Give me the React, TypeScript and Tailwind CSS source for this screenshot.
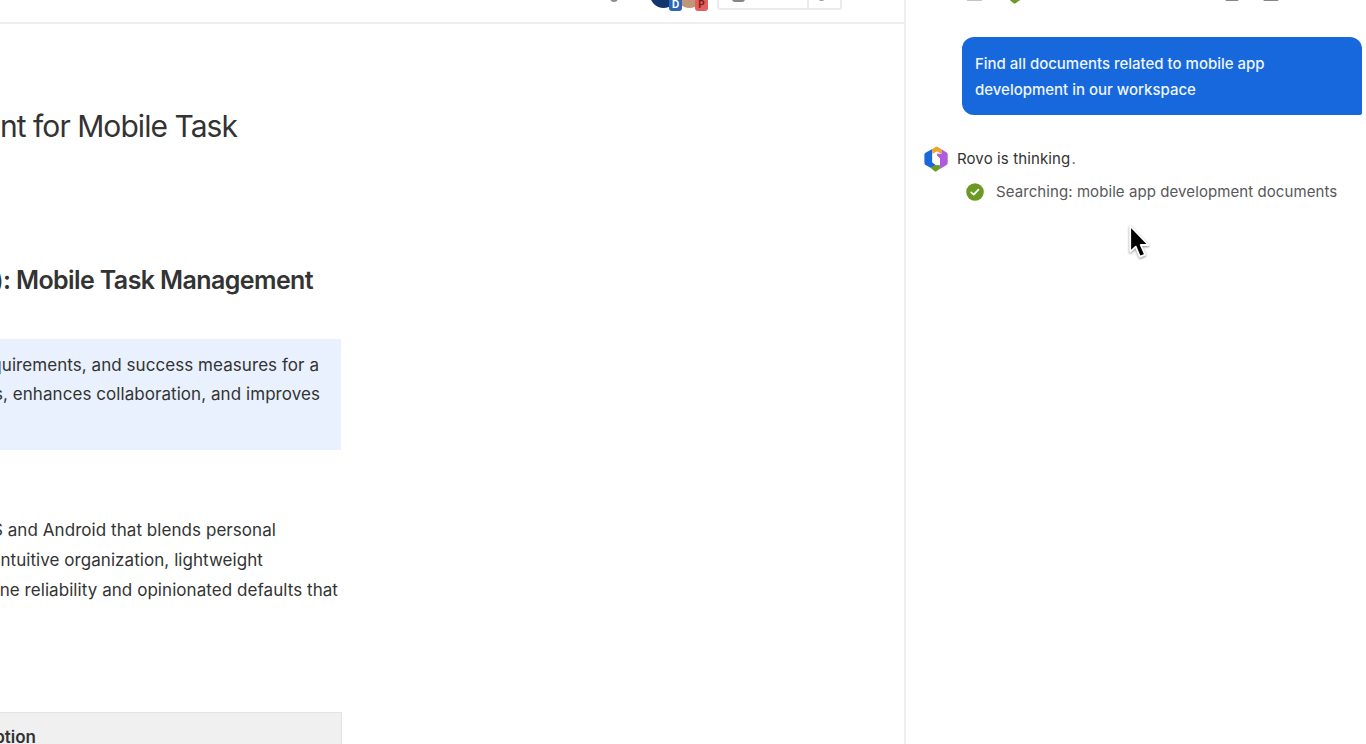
import type { ReactNode } from "react";

function RovoLogo({ className }: { className?: string }) {
  return (
    <svg viewBox="0 0 24 26" className={className}>
      <path d="M8 3 15 2l4 6v12l-7 2-5-5Z" fill="#fff" />
      <path d="M8.300 2.900v12.800q0 .8.700 1.300l3 2.200-5 2.900L1.500 18.900Q.400 18.200.400 17V8.600q0-1.200 1.100-1.900Z" fill="#1868db" />
      <path d="M8 3.300 11.400.9q.900-.6 1.800-.1L17.600 3.300v4.700L13.200 5.400 8.600 8Z" fill="#eaa62b" />
      <path d="M17.600 3.300l5 3.300q1.100.7 1.100 1.900v8.600q0 1.200-1.100 1.900L15.900 23v-9.600q0-1-.8-1.700l-2.300-1.800V7.600L17.600 8Z" fill="#af5bdc" />
      <path d="M6.500 21.800 11 19l4.900-2.500v6.300l-3.400 2.500q-.8.500-1.600.1Z" fill="#6a9a23" />
      <path d="M8.500 8 13.100 5.400v4.400l2.900 2.400v6.700l-3.400.3-3.500-2.500q-.6-.5-.6-1.200Z" fill="#fff" />
    </svg>
  );
}

function CheckBadge() {
  return (
    <svg viewBox="0 0 18 18" className="h-[18px] w-[18px] shrink-0">
      <circle cx="9" cy="9" r="8.800" fill="#6a9a23" />
      <path d="m5.200 9.400 2.500 2.300 4.800-5" fill="none" stroke="#fff" strokeWidth="1.700" strokeLinecap="round" strokeLinejoin="round" />
    </svg>
  );
}

function Cursor() {
  return (
    <svg viewBox="0 0 24 36" className="absolute top-[224px] left-[222px] h-9 w-6 drop-shadow-[0_1px_1px_rgba(0,0,0,0.45)]">
      <path d="M2.200 2v25.800l5.500-5.100 4.200 10.200 5.200-2.200-4.400-9.700h7.800Z" fill="#000" stroke="#fff" strokeWidth="1.800" strokeLinejoin="round" />
    </svg>
  );
}

// Lines are anchored on their right edge, the left side runs off screen
function Line({ className, children }: { className: string; children: ReactNode }) {
  return <div className={`flex justify-end whitespace-nowrap ${className}`}>{children}</div>;
}

function Avatar({ color, badge, letter }: { color: string; badge: string; letter: string }) {
  return (
    <div className={`relative h-[27px] w-[27px] rounded-full ${color}`}>
      <span className={`absolute -right-[5px] -bottom-[3px] z-10 flex h-[14px] w-[13px] items-center justify-center rounded-[3px] text-[10px] font-bold ${badge}`}>
        {letter}
      </span>
    </div>
  );
}

// Scrolled almost out of view: only the lower edge of each control shows
function Toolbar() {
  return (
    <header className="h-6 shrink-0 border-b-2 border-[#efeff0]">
      <div className="flex h-2 items-end pl-[610px]">
        <div className="mb-1.5 h-3 w-2 rounded-full bg-[#8c8c8c]" />
        <div className="ml-8 flex">
          <Avatar color="bg-[#12356e]" badge="bg-[#2c66b8] text-white" letter="D" />
          <div className="-ml-px">
            <Avatar color="bg-[#c19578]" badge="bg-[#e2605b] text-[#7c1d1d]" letter="P" />
          </div>
        </div>
        <div className="-mb-0.5 ml-[14px] flex h-[30px] w-[125px] items-end rounded-[3px] border-2 border-[#ebebec]">
          <div className="flex h-full w-[90px] items-end border-r-2 border-[#ebebec] pb-1.5 pl-[13px]">
            <div className="h-[14px] w-[13px] rounded-[3px] border-2 border-[#858585]" />
          </div>
          <div className="mb-[7px] ml-[9px] h-[13px] w-[7px] rounded-full bg-[#999]" />
        </div>
      </div>
    </header>
  );
}

function Document() {
  return (
    <main className="flex w-[904px] shrink-0 flex-col overflow-hidden">
      <Toolbar />
      <h1 className="mt-[82px]">
        <Line className="w-[237px] text-[30px] leading-[40px] tracking-[-0.95px]">nt for Mobile Task</Line>
      </h1>
      <h2 className="mt-[118px]">
        <Line className="w-[313px] text-[25px] leading-8 font-semibold tracking-[-0.6px]">): Mobile Task Management</Line>
      </h2>
      <section className="mt-[43px] h-[111px] w-[341px] shrink-0 bg-[#e8f1fd] pt-[11.500px] text-[17px] leading-[29.500px] tracking-[0.06px]">
        <Line className="w-[319px]">quirements, and success measures for a</Line>
        <Line className="w-[320px]">s, enhances collaboration, and improves</Line>
      </section>
      <section className="mt-[65px] text-[17px] leading-[30px] tracking-[0.06px]">
        <Line className="w-[276px]">S and Android that blends personal</Line>
        <Line className="w-[263px]">intuitive organization, lightweight</Line>
        <Line className="w-[338px]">ine reliability and opinionated defaults that</Line>
      </section>
      <div className="mt-[107px] h-10 w-[342px] shrink-0 border-t border-r border-[#e3e3e3] bg-[#f0f0f0] pt-[9px]">
        <Line className="w-[36px] text-[17px] leading-[30px] font-semibold">ption</Line>
      </div>
    </main>
  );
}

function PanelHeader() {
  return (
    <header className="flex h-[37px] items-start pl-[61px]">
      <div className="h-px w-[15px] bg-[#c4c4c4]" />
      <RovoLogo className="-mt-[22px] ml-[21px] h-[26px] w-6" />
      <div className="-mt-3 ml-[198px] h-[13px] w-[14px] rounded-[2px] border-2 border-[#858585]" />
      <div className="-mt-3 ml-6 h-[13px] w-4 rounded-[2px] border-2 border-[#858585]" />
    </header>
  );
}

function ChatPanel() {
  return (
    <aside className="relative flex w-[462px] shrink-0 flex-col overflow-hidden border-l-2 border-[#eeeeef]">
      <PanelHeader />
      <div className="mr-1 ml-14 h-[78px] rounded-xl rounded-br-[2px] bg-[#1668dc] px-[13px] pt-[14px] text-[15px] leading-[26px] font-medium tracking-[-0.01px] text-[#eef5ff]">
        <p>
          Find all documents related to mobile app
          <br />
          development in our workspace
        </p>
      </div>
      <div className="mt-[31px] ml-[18px] flex h-[26px] items-center gap-[9px] text-[15px] leading-[26px] tracking-[0.12px]">
        <RovoLogo className="h-[26px] w-6 shrink-0" />
        <span>
          Rovo is thinking<span className="ml-px text-[#77787a]">.</span>
        </span>
      </div>
      <div className="mt-[7px] ml-[60px] flex items-center gap-3 text-[15px] leading-[26px] tracking-[0.08px] whitespace-nowrap text-[#58585a]">
        <CheckBadge />
        <span>Searching: mobile app development documents</span>
      </div>
      <Cursor />
    </aside>
  );
}

export default function App() {
  return (
    <div className="flex h-[744px] w-[1366px] overflow-hidden bg-white font-['Inter',sans-serif] text-[#333333]">
      <Document />
      <ChatPanel />
    </div>
  );
}
